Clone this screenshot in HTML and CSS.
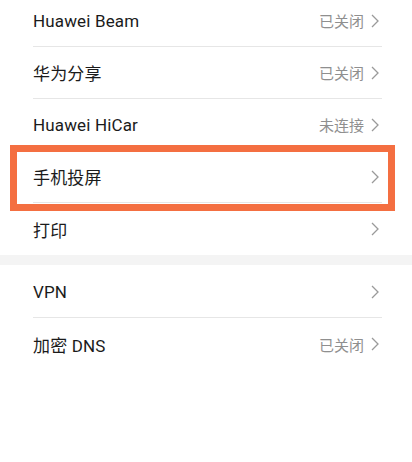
FILE: index.html
```html
<!DOCTYPE html>
<html lang="zh-CN">
<head>
<meta charset="utf-8">
<link rel="stylesheet" href="styles.css">
</head>
<body>
<div class="page">
  <div class="group first">
    <div class="row"><span class="label">Huawei Beam</span><span class="right"><span class="status">已关闭</span><svg class="chev" viewBox="0 0 8 14"><path d="M1 1 L7 7 L1 13"/></svg></span></div>
    <div class="row"><span class="label">华为分享</span><span class="right"><span class="status">已关闭</span><svg class="chev" viewBox="0 0 8 14"><path d="M1 1 L7 7 L1 13"/></svg></span></div>
    <div class="row"><span class="label">Huawei HiCar</span><span class="right"><span class="status">未连接</span><svg class="chev" viewBox="0 0 8 14"><path d="M1 1 L7 7 L1 13"/></svg></span></div>
    <div class="row highlight"><span class="label">手机投屏</span><span class="right"><svg class="chev" viewBox="0 0 8 14"><path d="M1 1 L7 7 L1 13"/></svg></span><div class="mark"></div></div>
    <div class="row last"><span class="label">打印</span><span class="right"><svg class="chev" viewBox="0 0 8 14"><path d="M1 1 L7 7 L1 13"/></svg></span></div>
  </div>
  <div class="gap"></div>
  <div class="group second">
    <div class="row"><span class="label">VPN</span><span class="right"><svg class="chev" viewBox="0 0 8 14"><path d="M1 1 L7 7 L1 13"/></svg></span></div>
    <div class="row last"><span class="label">加密 DNS</span><span class="right"><span class="status">已关闭</span><svg class="chev" viewBox="0 0 8 14"><path d="M1 1 L7 7 L1 13"/></svg></span></div>
  </div>
</div>
</body>
</html>
```
FILE: styles.css
```css
html, body {
  margin: 0;
  padding: 0;
  background: #ffffff;
}
body {
  font-family: Roboto, "Noto Sans CJK SC", sans-serif;
  color: #1b1b1b;
  overflow: hidden;
}
.page {
  width: 412px;
  height: 462px;
}
.group.first {
  margin-top: -5px;
}
.group.second {
  padding-top: 1px;
}
.row {
  position: relative;
  height: 52px;
  margin: 0 30px 0 33px;
  display: flex;
  align-items: center;
  justify-content: space-between;
  border-bottom: 1px solid #e6e6e6;
  box-sizing: border-box;
}
.row.last {
  border-bottom: none;
}
.label {
  font-size: 17px;
  letter-spacing: 0.15px;
}
.right {
  display: flex;
  align-items: center;
  gap: 7px;
}
.status {
  font-size: 15px;
  color: #8f8f8f;
}
.chev {
  width: 8px;
  height: 14px;
  margin-right: 3px;
  fill: none;
  stroke: #9a9a9a;
  stroke-width: 1.3;
}
.gap {
  height: 10px;
  background: #f4f4f4;
}
.mark {
  position: absolute;
  left: -23px;
  right: -13px;
  top: -6px;
  bottom: -9px;
  border: 7px solid #f46f41;
  pointer-events: none;
}
```
